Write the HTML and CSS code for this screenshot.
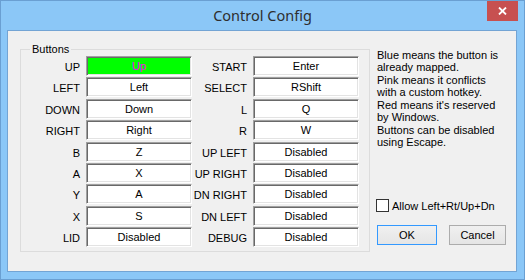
FILE: index.html
```html
<!DOCTYPE html>
<html>
<head>
<meta charset="utf-8">
<link rel="stylesheet" href="styles.css">
</head>
<body>
<div class="window">
  <div class="titlebar">
    <span class="title">Control Config</span>
    <span class="close">
      <svg width="9" height="8" viewBox="0 0 9 8"><path d="M1 0.5 L8 7.5 M8 0.5 L1 7.5" stroke="#fff" stroke-width="1.8"/></svg>
    </span>
  </div>
  <div class="client">
    <fieldset class="group">
      <legend>Buttons</legend>
      <div class="grid">
        <span class="lbl">UP</span><span class="box mapped">Up</span>
        <span class="lbl">START</span><span class="box">Enter</span>
        <span class="lbl">LEFT</span><span class="box">Left</span>
        <span class="lbl">SELECT</span><span class="box">RShift</span>
        <span class="lbl">DOWN</span><span class="box">Down</span>
        <span class="lbl">L</span><span class="box">Q</span>
        <span class="lbl">RIGHT</span><span class="box">Right</span>
        <span class="lbl">R</span><span class="box">W</span>
        <span class="lbl">B</span><span class="box">Z</span>
        <span class="lbl">UP LEFT</span><span class="box">Disabled</span>
        <span class="lbl">A</span><span class="box">X</span>
        <span class="lbl">UP RIGHT</span><span class="box">Disabled</span>
        <span class="lbl">Y</span><span class="box">A</span>
        <span class="lbl">DN RIGHT</span><span class="box">Disabled</span>
        <span class="lbl">X</span><span class="box">S</span>
        <span class="lbl">DN LEFT</span><span class="box">Disabled</span>
        <span class="lbl">LID</span><span class="box">Disabled</span>
        <span class="lbl">DEBUG</span><span class="box">Disabled</span>
      </div>
    </fieldset>
    <div class="side">
      <p class="help">Blue means the button is<br>already mapped.<br>Pink means it conflicts<br>with a custom hotkey.<br>Red means it's reserved<br>by Windows.<br>Buttons can be disabled<br>using Escape.</p>
      <label class="check"><span class="cb"></span>Allow Left+Rt/Up+Dn</label>
      <div class="buttons">
        <span class="btn ok">OK</span>
        <span class="btn cancel">Cancel</span>
      </div>
    </div>
  </div>
</div>
</body>
</html>
```
FILE: styles.css
```css
* { box-sizing: border-box; }
html, body { margin: 0; padding: 0; }
body {
  width: 525px;
  height: 280px;
  overflow: hidden;
  font-family: "Liberation Sans", Arial, sans-serif;
  font-size: 11px;
  color: #000;
}
.window {
  width: 525px;
  height: 280px;
  background: #8bc7f7;
  border: 1px solid #6a9fd2;
  display: flex;
  flex-direction: column;
}
.titlebar {
  height: 29px;
  flex: none;
  display: grid;
  grid-template-columns: 1fr auto 1fr;
}
.title {
  grid-column: 2;
  font-family: "Noto Sans", "Open Sans", sans-serif;
  font-size: 14.5px;
  color: #2e2e2e;
  line-height: 28px;
}
.close {
  grid-column: 3;
  justify-self: end;
  align-self: start;
  width: 31px;
  height: 20px;
  margin-right: 6px;
  background: #c75050;
  display: flex;
  align-items: center;
  justify-content: center;
}
.client {
  margin-left: 6px;
  width: 510px;
  height: 242px;
  background: #f0f0f0;
  border: 1px solid #73a4d4;
  display: flex;
  align-items: stretch;
  padding: 12px 0 19px 12px;
}
.group {
  margin: 0;
  width: 350px;
  border: 1px solid #dcdcdc;
  padding: 0 0 0 4px;
}
.group legend {
  padding: 0 2px;
  margin-left: 5px;
  line-height: 13px;
  height: 13px;
}
.grid {
  display: grid;
  grid-template-columns: 61px 106px 61px 106px;
  grid-auto-rows: 20px;
  row-gap: 1.375px;
  margin-top: 0px;
}
.lbl {
  text-align: right;
  padding: 3px 6px 0 0;
  line-height: 17px;
  white-space: nowrap;
}
.box {
  background: #fff;
  border: 1px solid;
  border-color: #a0a0a0 #fff #fff #a0a0a0;
  box-shadow: inset 1px 1px 0 #696969, inset -1px -1px 0 #e3e3e3;
  text-align: center;
  line-height: 16px;
  padding-top: 1px;
}
.box.mapped {
  background: #00ff00;
  color: #ff00ff;
}
.side {
  margin-left: 7px;
  flex: 1;
  display: flex;
  flex-direction: column;
  padding: 6px 0 7px 0;
}
.help {
  margin: 0;
  line-height: 12.45px;
  white-space: nowrap;
}
.check {
  margin-top: auto;
  display: flex;
  align-items: center;
  gap: 3px;
  margin-left: -1px;
  height: 13px;
}
.cb {
  width: 13px;
  height: 13px;
  background: #fff;
  border: 1px solid #333;
}
.buttons {
  display: flex;
  gap: 12px;
  margin-top: 13px;
}
.btn {
  height: 20px;
  line-height: 18px;
  text-align: center;
  border: 1px solid #acacac;
  background: linear-gradient(#f0f0f0, #e5e5e5);
}
.ok {
  width: 60px;
  border-color: #3399ff;
}
.cancel {
  width: 57px;
}
```
